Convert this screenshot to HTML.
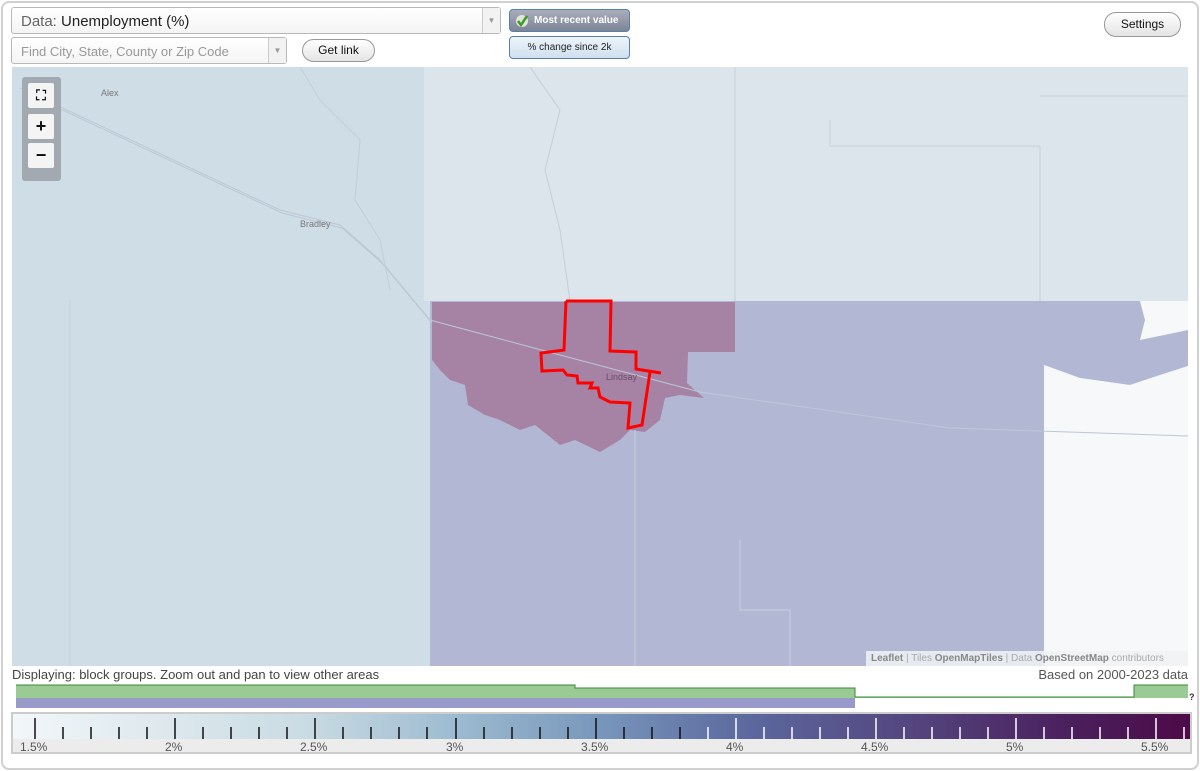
<!DOCTYPE html>
<html><head><meta charset="utf-8"><style>
*{box-sizing:border-box}
body{margin:0;width:1200px;height:771px;background:#fff;font-family:"Liberation Sans",sans-serif;position:relative;overflow:hidden}
.frame{position:absolute;left:1px;top:1px;width:1198px;height:769px;border:2px solid #d0d0d0;border-radius:8px}
.abs{position:absolute}
.sel{border:1px solid #b8b8b8;border-radius:3px;background:linear-gradient(#fff,#f4f4f4)}
.arr{position:absolute;right:0;top:0;bottom:0;width:18px;border-left:1px solid #ccc;background:#f2f2f2;color:#999;font-size:8px;text-align:center}
.btn{border:1px solid #999;border-radius:12px;background:linear-gradient(#fff,#e4e4e4);font-size:12px;text-align:center;color:#111}
.zb{position:absolute;left:6px;width:26px;height:25px;background:#f4f4f4;border-radius:2px;font-weight:bold;text-align:center;font-size:18px;line-height:24px;color:#111}
.lbl{position:absolute;top:740px;font-size:12px;color:#555}
</style></head><body>
<div class="frame"></div>

<div class="abs sel" style="left:11px;top:7px;width:490px;height:27px;font-size:15px;color:#222;padding:5px 9px"><span style="color:#666">Data:</span> Unemployment (%)<div class="arr" style="line-height:26px">▼</div></div>
<div class="abs sel" style="left:11px;top:37px;width:276px;height:27px;font-size:13px;color:#999;padding:6px 9px">Find City, State, County or Zip Code<div class="arr" style="line-height:26px">▼</div></div>
<div class="abs btn" style="left:302px;top:39px;width:73px;height:23px;line-height:21px">Get link</div>
<div class="abs" style="left:509px;top:9px;width:121px;height:23px;border:1px solid #5a7fa8;border-radius:4px;background:linear-gradient(#a9aebc,#7d8496);color:#fff;font-size:10px;font-weight:bold;line-height:21px;padding-left:24px">Most recent value
<svg class="abs" style="left:5px;top:4px" width="15" height="14"><circle cx="7" cy="7" r="6" fill="#dfe6d8"/><path d="M3 7l3 4 6-9" stroke="#3f9a2b" stroke-width="2.5" fill="none"/></svg></div>
<div class="abs" style="left:509px;top:36px;width:121px;height:23px;border:1px solid #5a7fa8;border-radius:4px;background:linear-gradient(#eef4fa,#cfe0ef);color:#222;font-size:10px;line-height:21px;text-align:center">% change since 2k</div>
<div class="abs btn" style="left:1104px;top:12px;width:77px;height:25px;line-height:23px">Settings</div>

<svg class="abs" style="left:12px;top:67px" width="1176" height="599" viewBox="12 67 1176 599">
<rect x="12" y="67" width="1176" height="599" fill="#cfdde7"/>
<rect x="424" y="67" width="764" height="234" fill="#dbe5eb"/>
<path d="M430 301H1140L1145 320 1140 340 1188 330V366L1160 375 1130 385 1080 378 1044 365V666H430Z" fill="#b2b8d3"/>
<path d="M1044 365 1080 378 1130 385 1160 375 1188 366V666H1044Z" fill="#f6f8f9"/>
<path d="M1140 301H1188V330L1140 340 1145 320Z" fill="#f6f8f9"/>
<path d="M432 302H735V352H688L687 383 704 398 680 395 665 398 660 420 645 432 630 430 620 440 600 452 575 440 560 445 535 425 520 430 500 420 485 415 468 405 465 385 450 380 440 370 432 360Z" fill="#a683a5"/>
<g fill="none" stroke="#bcc8d4" stroke-width="1">
<path d="M20 88 280 210 340 225 380 260 430 320 560 355 700 392 950 428 1188 436"/>
<path d="M22 91 282 213 342 228 382 263 432 323"/>
<path d="M735 67V301M830 120V146H1040V301M1040 96H1188M635 430V666M740 540V610H790V666M70 300V666" stroke="#c6d1dc"/>
<path d="M300 67 320 100 360 140 355 200 380 240 390 290M530 67 560 110 545 170 560 230 570 301" stroke="#c2ced9"/>
</g>
<path d="M566 301H611L610 351 636 352 636 369 661 373M650 372 642 425 628 428 630 403 610 402 600 397 598 388 590 388 592 383 578 383 577 376 567 375 563 370 542 371 541 353 564 350 566 301" fill="none" stroke="#f00" stroke-width="3"/>
<g font-size="9" fill="#777"><text x="101" y="96">Alex</text><text x="300" y="227">Bradley</text><text x="606" y="380" fill="#6a4d6a">Lindsay</text></g>
</svg>
<div class="abs" style="left:22px;top:77px;width:39px;height:104px;background:#a2a9b0;border-radius:3px">
<div class="zb" style="top:6px;font-size:14px">⛶</div><div class="zb" style="top:37px">+</div><div class="zb" style="top:66px">−</div></div>
<div class="abs" style="left:866px;top:651px;width:322px;height:15px;background:rgba(240,242,245,.85);font-size:10px;color:#aaa;padding-left:5px;line-height:15px;white-space:nowrap"><b style="color:#888">Leaflet</b> | Tiles <b style="color:#888">OpenMapTiles</b> | Data <b style="color:#888">OpenStreetMap</b> contributors</div>

<div class="abs" style="left:12px;top:667px;font-size:13px;color:#444">Displaying: block groups. Zoom out and pan to view other areas</div>
<div class="abs" style="right:12px;top:667px;font-size:13px;color:#555">Based on 2000-2023 data</div>
<svg class="abs" style="left:0;top:680px" width="1200" height="32">
<path d="M16 5H575V8H855V17H1134V5H1188V18H16Z" fill="#9acb95"/>
<path d="M16 5H575V8H855V17H1134V5H1188" fill="none" stroke="#3a8a34" stroke-width="1"/>
<rect x="16" y="18" width="839" height="10" fill="#9a9aca"/>
<text x="1189" y="20" font-size="9" font-weight="bold" fill="#333">?</text>
</svg>
<div class="abs" style="left:11px;top:712px;width:1181px;height:42px;border:2px solid #ccc;background:#ececec"></div>
<div class="abs" style="left:13px;top:714px;width:1177px;height:25px;background:linear-gradient(90deg,#f2f7f9 0%,#c9dbe3 25%,#9bbad0 38%,#7896bb 50%,#5c6a9f 62%,#54467f 76%,#4a1f5c 90%,#4c0a48 100%)"></div>
<svg class="abs" style="left:0;top:714px" width="1200" height="25">
<g stroke-width="1.5">
<path stroke="#111" d="M35 4V25M175 4V25M315 4V25M456 4V25M596 4V25"/>
<path stroke="#111" d="M63 13V25M91 13V25M119 13V25M147 13V25M203 13V25M231 13V25M259 13V25M287 13V25M343 13V25M371 13V25M399 13V25M427 13V25M484 13V25M512 13V25M540 13V25M568 13V25M624 13V25M652 13V25M680 13V25"/>
<path stroke="#fff" d="M736 4V25M876 4V25M1016 4V25M1156 4V25"/>
<path stroke="#fff" d="M708 13V25M764 13V25M792 13V25M820 13V25M848 13V25M904 13V25M932 13V25M960 13V25M988 13V25M1044 13V25M1072 13V25M1100 13V25M1128 13V25M1184 13V25"/>
</g></svg>
<div class="lbl" style="left:20px">1.5%</div><div class="lbl" style="left:165px">2%</div><div class="lbl" style="left:300px">2.5%</div><div class="lbl" style="left:446px">3%</div><div class="lbl" style="left:581px">3.5%</div><div class="lbl" style="left:726px">4%</div><div class="lbl" style="left:861px">4.5%</div><div class="lbl" style="left:1006px">5%</div><div class="lbl" style="left:1141px">5.5%</div>
</body></html>
